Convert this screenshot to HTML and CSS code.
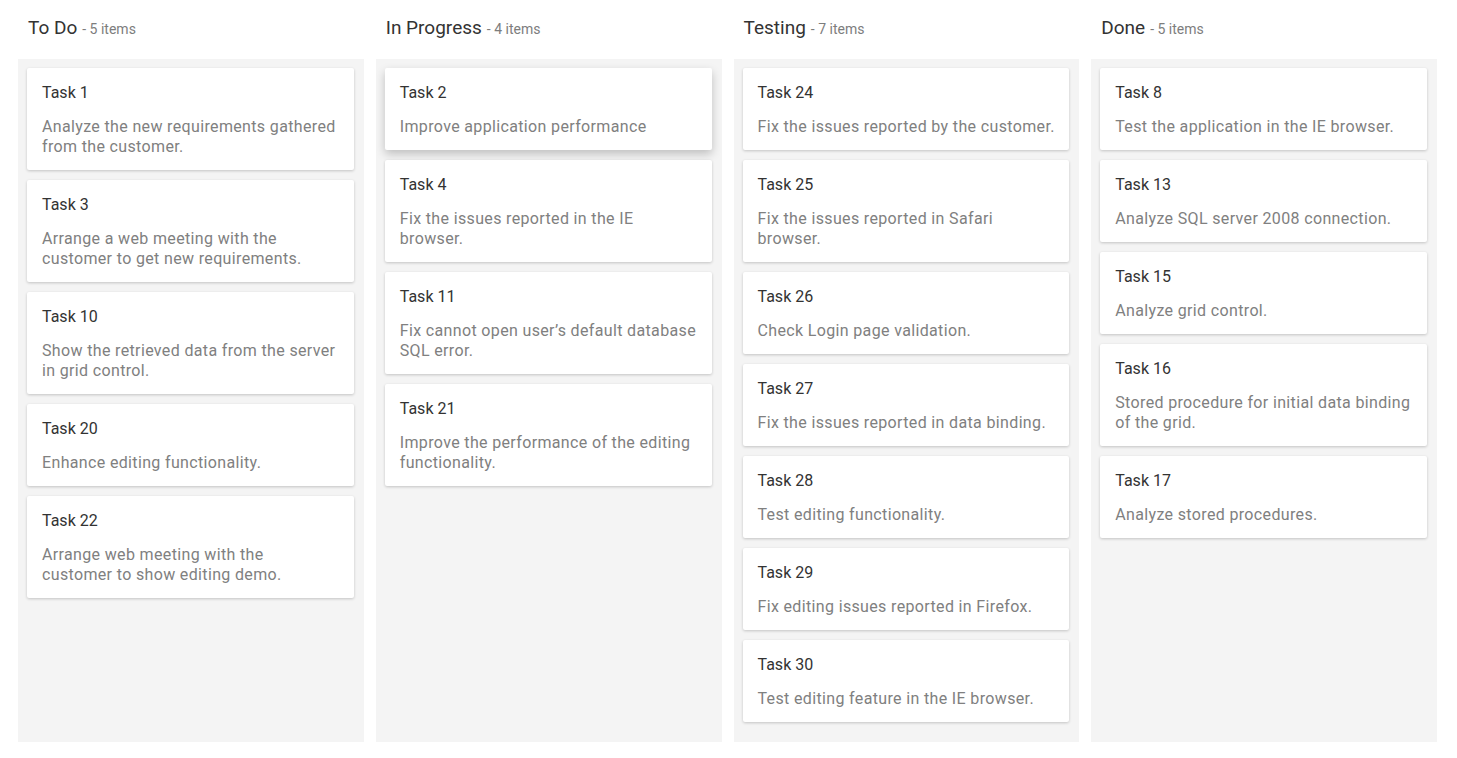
FILE: index.html
```html
<!DOCTYPE html>
<html lang="en">
<head>
  <meta charset="UTF-8">
  <title>Kanban Board</title>
  <link rel="stylesheet" href="styles.css">
</head>
<body>
<div class="board">

  <!-- To Do -->
  <div class="lane">
    <div class="lane-head"><span class="lane-title">To Do</span><span class="lane-count">- 5 items</span></div>
    <div class="lane-body">
      <div class="card">
        <div class="card-title">Task 1</div>
        <div class="card-text">Analyze the new requirements gathered from the customer.</div>
      </div>
      <div class="card">
        <div class="card-title">Task 3</div>
        <div class="card-text">Arrange a web meeting with the customer to get new requirements.</div>
      </div>
      <div class="card">
        <div class="card-title">Task 10</div>
        <div class="card-text">Show the retrieved data from the server in grid control.</div>
      </div>
      <div class="card">
        <div class="card-title">Task 20</div>
        <div class="card-text">Enhance editing functionality.</div>
      </div>
      <div class="card">
        <div class="card-title">Task 22</div>
        <div class="card-text">Arrange web meeting with the<br>customer to show editing demo.</div>
      </div>
    </div>
  </div>

  <!-- In Progress -->
  <div class="lane">
    <div class="lane-head"><span class="lane-title">In Progress</span><span class="lane-count">- 4 items</span></div>
    <div class="lane-body">
      <div class="card selected">
        <div class="card-title">Task 2</div>
        <div class="card-text">Improve application performance</div>
      </div>
      <div class="card">
        <div class="card-title">Task 4</div>
        <div class="card-text">Fix the issues reported in the IE browser.</div>
      </div>
      <div class="card">
        <div class="card-title">Task 11</div>
        <div class="card-text">Fix cannot open user’s default database SQL error.</div>
      </div>
      <div class="card">
        <div class="card-title">Task 21</div>
        <div class="card-text">Improve the performance of the editing functionality.</div>
      </div>
    </div>
  </div>

  <!-- Testing -->
  <div class="lane">
    <div class="lane-head"><span class="lane-title">Testing</span><span class="lane-count">- 7 items</span></div>
    <div class="lane-body">
      <div class="card">
        <div class="card-title">Task 24</div>
        <div class="card-text">Fix the issues reported by the customer.</div>
      </div>
      <div class="card">
        <div class="card-title">Task 25</div>
        <div class="card-text">Fix the issues reported in Safari browser.</div>
      </div>
      <div class="card">
        <div class="card-title">Task 26</div>
        <div class="card-text">Check Login page validation.</div>
      </div>
      <div class="card">
        <div class="card-title">Task 27</div>
        <div class="card-text">Fix the issues reported in data binding.</div>
      </div>
      <div class="card">
        <div class="card-title">Task 28</div>
        <div class="card-text">Test editing functionality.</div>
      </div>
      <div class="card">
        <div class="card-title">Task 29</div>
        <div class="card-text">Fix editing issues reported in Firefox.</div>
      </div>
      <div class="card">
        <div class="card-title">Task 30</div>
        <div class="card-text">Test editing feature in the IE browser.</div>
      </div>
    </div>
  </div>

  <!-- Done -->
  <div class="lane">
    <div class="lane-head"><span class="lane-title">Done</span><span class="lane-count">- 5 items</span></div>
    <div class="lane-body">
      <div class="card">
        <div class="card-title">Task 8</div>
        <div class="card-text">Test the application in the IE browser.</div>
      </div>
      <div class="card">
        <div class="card-title">Task 13</div>
        <div class="card-text">Analyze SQL server 2008 connection.</div>
      </div>
      <div class="card">
        <div class="card-title">Task 15</div>
        <div class="card-text">Analyze grid control.</div>
      </div>
      <div class="card">
        <div class="card-title">Task 16</div>
        <div class="card-text">Stored procedure for initial data binding of the grid.</div>
      </div>
      <div class="card">
        <div class="card-title">Task 17</div>
        <div class="card-text">Analyze stored procedures.</div>
      </div>
    </div>
  </div>

</div>
</body>
</html>
```

FILE: styles.css
```css
body {
  margin: 0;
  font-family: Roboto, "Liberation Sans", sans-serif;
  background-color: #ffffff;
  color: #333333;
}

.board {
  display: grid;
  grid-template-columns: repeat(4, 1fr);
  gap: 12px;
  padding: 0 20px 17px 18px;
}

.lane {
  display: flex;
  flex-direction: column;
  min-width: 0;
}

.lane-head {
  height: 59px;
  box-sizing: border-box;
  padding: 17px 0 0 10px;
  line-height: 22px;
  white-space: nowrap;
}

.lane-title {
  font-size: 19px;
  color: #333333;
  margin-right: 5px;
}

.lane-count {
  font-size: 14px;
  color: #7d7d7d;
}

.lane-body {
  flex: 1;
  background-color: #f4f4f4;
  padding: 9px 10px 20px 9px;
  display: flex;
  flex-direction: column;
  gap: 10px;
}

.card {
  background-color: #ffffff;
  border-radius: 2px;
  padding: 13px 13px 13px 15px;
  box-shadow: 0 1px 3px rgba(0, 0, 0, 0.2);
}

.card.selected {
  box-shadow: 0 4px 10px rgba(0, 0, 0, 0.22);
}

.card-title {
  font-size: 16px;
  line-height: 24px;
  color: #333333;
  margin-bottom: 12px;
}

.card-text {
  font-size: 16px;
  line-height: 20px;
  letter-spacing: 0.35px;
  color: #808080;
}
```
